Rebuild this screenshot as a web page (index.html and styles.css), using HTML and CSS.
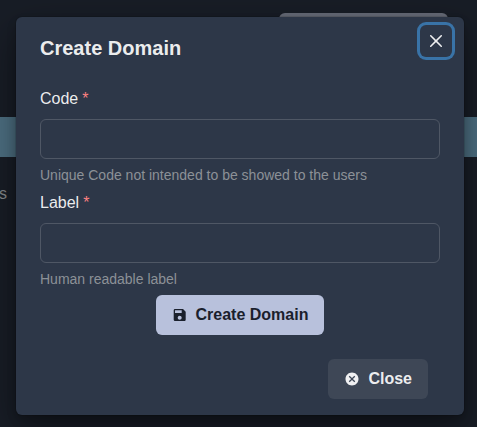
FILE: index.html
```
<!DOCTYPE html>
<html lang="en">
<head>
<meta charset="utf-8">
<title>Create Domain</title>
<link rel="stylesheet" href="styles.css">
</head>
<body>
<div class="page">
  <div class="page-button"></div>
  <div class="page-band"></div>
  <div class="page-text">s</div>
</div>
<section class="modal" role="dialog" aria-label="Create Domain">
  <header class="modal-header">Create Domain</header>
  <button class="modal-x" aria-label="Close dialog">
    <svg viewBox="0 0 24 24" width="12" height="12"><path fill="currentColor" d="M.439,21.44a1.5,1.5,0,0,0,2.122,2.121L11.823,14.3a.25.25,0,0,1,.354,0l9.262,9.263a1.5,1.5,0,1,0,2.122-2.121L14.3,12.177a.25.25,0,0,1,0-.354l9.263-9.262A1.5,1.5,0,0,0,21.439.44L12.177,9.7a.25.25,0,0,1-.354,0L2.561.44A1.5,1.5,0,0,0,.439,2.561L9.7,11.823a.25.25,0,0,1,0,.354Z"/></svg>
  </button>
  <form class="modal-body">
    <div class="field">
      <label for="code">Code<span class="required">*</span></label>
      <input id="code" type="text">
      <div class="helper">Unique Code not intended to be showed to the users</div>
    </div>
    <div class="field">
      <label for="label">Label<span class="required">*</span></label>
      <input id="label" type="text">
      <div class="helper">Human readable label</div>
    </div>
    <button class="button primary" type="button">
      <svg viewBox="0 0 24 24" width="16" height="16"><path fill="currentColor" d="M17 3H5a2 2 0 0 0-2 2v14a2 2 0 0 0 2 2h14c1.1 0 2-.9 2-2V7l-4-4zm-5 16c-1.66 0-3-1.34-3-3s1.34-3 3-3 3 1.34 3 3-1.34 3-3 3zm3-10H5V5h10v4z"/></svg>
      Create Domain
    </button>
  </form>
  <footer class="modal-footer">
    <button class="button secondary" type="button">
      <svg viewBox="0 0 512 512" width="16" height="16"><path fill="currentColor" d="M256 48C140.600 48 48 140.600 48 256s92.600 208 208 208 208-92.600 208-208S371.400 48 256 48zm104 282.900L330.900 360 256 285.100 181.100 360 152 330.900 226.900 256 152 181.100 181.100 152 256 226.900 330.900 152 360 181.100 285.100 256 360 330.900z"/></svg>
      Close
    </button>
  </footer>
</section>
</body>
</html>
```
FILE: styles.css
```
* {
  box-sizing: border-box;
}

body {
  margin: 0;
  height: 427px;
  overflow: hidden;
  background: #181d26;
  color: rgba(255, 255, 255, 0.92);
  font: 16px/24px "Liberation Sans", Arial, sans-serif;
  padding: 17px 13px 0 16px;
}

.page {
  position: absolute;
  inset: 0;
  overflow: hidden;
}

.page-button {
  width: 169px;
  height: 40px;
  margin: 13px 0 0 279px;
  border-radius: 6px;
  background: #676c78;
}

.page-band {
  height: 40px;
  margin-top: 64px;
  background: #4d6f82;
}

.page-text {
  margin: 25px 0 0 -1px;
  color: #85878a;
}

.modal {
  position: relative;
  width: 448px;
  border-radius: 6px;
  background: #2d3748;
  box-shadow: rgba(0, 0, 0, 0.1) 0 0 0 1px, rgba(0, 0, 0, 0.2) 0 5px 10px, rgba(0, 0, 0, 0.4) 0 15px 40px;
}

.modal-header {
  padding: 16px 24px;
  font-size: 20px;
  font-weight: 600;
  line-height: 30px;
}

.modal-x {
  position: absolute;
  top: 8px;
  right: 12px;
  width: 32px;
  height: 32px;
  padding: 0;
  display: flex;
  align-items: center;
  justify-content: center;
  border: 0;
  border-radius: 6px;
  background: transparent;
  color: inherit;
  box-shadow: 0 0 0 3px #3973a7;
}

.modal-body {
  display: flex;
  flex-direction: column;
  gap: 8px;
  padding: 8px 24px;
}

.field label {
  display: block;
  margin-bottom: 8px;
}

.required {
  margin-left: 4px;
  color: #fc8181;
}

.field input {
  display: block;
  width: 100%;
  height: 40px;
  padding: 0 16px;
  border: 1px solid #4f5765;
  border-radius: 6px;
  background: transparent;
  color: inherit;
  font: inherit;
}

.helper {
  margin-top: 8px;
  color: #8c9197;
  font-size: 14px;
  line-height: 16px;
}

.button {
  display: flex;
  align-items: center;
  gap: 8px;
  height: 40px;
  padding: 0 16px;
  border: 0;
  border-radius: 6px;
  font: 600 16px/1.2 "Liberation Sans", Arial, sans-serif;
}

.primary {
  align-self: center;
  background: #b8c1dc;
  color: #1a202c;
}

.primary svg {
  transform: translateX(-0.3px);
}

.secondary {
  margin-right: 12px;
  background: #3e4756;
  color: rgba(255, 255, 255, 0.92);
}

.modal-footer {
  display: flex;
  justify-content: flex-end;
  padding: 16px 24px;
}
```
